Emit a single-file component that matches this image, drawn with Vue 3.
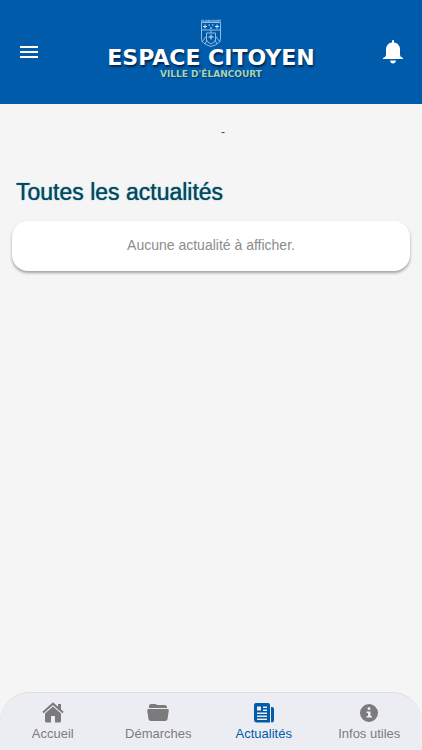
<script setup>
import { ref } from "vue";

const current = ref("news");

const tabs = [
  { id: "home", label: "Accueil" },
  { id: "procedures", label: "Démarches" },
  { id: "news", label: "Actualités" },
  { id: "infos", label: "Infos utiles" },
];
</script>

<template>
  <div class="app">
    <header class="header">
      <button class="header__btn" aria-label="Menu">
        <svg width="24" height="24" viewBox="0 0 24 24">
          <path d="M3 6h18v2H3zM3 11h18v2H3zM3 16h18v2H3z" />
        </svg>
      </button>
      <div class="logo">
        <svg class="logo__crest" width="20" height="28" viewBox="0 0 20 28">
          <text class="logo__banner" x="10" y="3" text-anchor="middle">ELANCOURT</text>
          <path d="M.5 3.500h19v17q0 4-9.500 7Q.5 24.500.5 20.500zM.5 11h19" />
          <path d="M10 11v3M5.500 14h9v7q0 2-4.500 4-4.500-2-4.500-4zM5.500 17L1 23M14.500 17L19 23M6 21l-2 4M14 21l2 4" />
          <path
            class="logo__cross"
            d="M10 15.500v5M7.500 18h5M4 5.500v4M2 7.500h4M16 5.500v4M14 7.500h4M7.500 6h1.500M11 6h1.500M10 8v2"
          />
        </svg>
        <span class="logo__name">ESPACE CITOYEN</span>
        <span class="logo__city">VILLE D'ÉLANCOURT</span>
      </div>
      <button class="header__btn" aria-label="Notifications">
        <svg width="24" height="24" viewBox="0 0 24 24">
          <path
            d="M12 0q1 0 1 1v1.500C17 3 19 6 19 9.500V15q0 2 3 3v1H2v-1q3-1 3-3V9.500C5 6 7 3 11 2.500V1q0-1 1-1zM9 20.500h6q-.5 3-3 3t-3-3z"
          />
        </svg>
      </button>
    </header>

    <main class="content">
      <p class="user">-</p>
      <h1 class="title">Toutes les actualités</h1>
      <div class="card">Aucune actualité à afficher.</div>
    </main>

    <nav class="tabs">
      <button
        v-for="tab in tabs"
        :key="tab.id"
        class="tabs__item"
        :class="{ 'is-active': current === tab.id }"
        @click="current = tab.id"
      >
        <svg v-if="tab.id === 'home'" width="24" height="22" viewBox="0 0 24 22">
          <path d="M4 11.500l8-7 8 7V19q0 1.500-1.500 1.500H14V14h-4v6.500H5.500Q4 20.500 4 19z" />
          <path class="tabs__roof" d="M2 10.500l10-8.800 10 8.800" />
          <path d="M17 2h3v6l-3-2.500z" />
        </svg>
        <svg v-else-if="tab.id === 'procedures'" width="24" height="22" viewBox="0 0 24 22">
          <path
            d="M3 6V4q0-2 2-2h4q1 0 2 1h7.500Q21 3 21 5v1zM2.500 7h19q1.500 0 1.300 1.500L21.500 17q-.3 2-2.500 2H5q-2.200 0-2.500-2L1.200 8.500Q1 7 2.500 7z"
          />
        </svg>
        <svg v-else-if="tab.id === 'news'" width="24" height="22" viewBox="0 0 24 22">
          <path
            fill-rule="evenodd"
            d="M4 1h12q2 0 2 2v17.500H5q-3 0-3-3V3q0-2 2-2zM5 4.500v4h4v-4zM11 4.500V6h4V4.500zM11 7.500V9h4V7.500zM5 10.500V12h10v-1.500zM5 13.500V15h10v-1.500zM5 16.500V18h10v-1.500z"
          />
          <path d="M19 5h1q2 0 2 2v11q0 2.500-2 2.500-1 0-1-1z" />
        </svg>
        <svg v-else width="24" height="22" viewBox="0 0 24 22">
          <path
            fill-rule="evenodd"
            d="M12 2a9 9 0 1 0 0 18 9 9 0 0 0 0-18zM12 5a1.500 1.500 0 1 1 0 3 1.500 1.500 0 0 1 0-3zM9.500 9.500h4V14H15v1.500H9.500V14H11v-3H9.500z"
          />
        </svg>
        <span>{{ tab.label }}</span>
      </button>
    </nav>
  </div>
</template>

<style>
body {
  margin: 0;
  background: #f5f5f5;
}
</style>

<style scoped>
.app {
  display: flex;
  flex-direction: column;
  min-height: 100vh;
  font-family: "Liberation Sans", Arial, sans-serif;
}

button {
  padding: 0;
  border: 0;
  background: none;
  font: inherit;
  cursor: pointer;
}

svg {
  display: block;
  fill: currentColor;
}

/*----------------------------
* Header
*----------------------------*/
.header {
  display: flex;
  align-items: center;
  justify-content: space-between;
  height: 104px;
  padding: 0 17px;
  box-sizing: border-box;
  background: #005baa;
}
.header__btn {
  color: #fff;
}
.logo {
  display: flex;
  flex-direction: column;
  align-items: center;
  padding-bottom: 6px;
  font-family: "DejaVu Sans", sans-serif;
  font-weight: bold;
  white-space: nowrap;
}
.logo__crest {
  fill: none;
  stroke: #8fbbe6;
  overflow: visible;
}
.logo__banner {
  font-size: 3px;
  fill: #a9cdf0;
  stroke: none;
}
.logo__cross {
  stroke: #d5e8fa;
}
.logo__name {
  font-size: 22px;
  line-height: 22px;
  color: #fff;
  text-shadow: 1px 2px 2px #00264d;
}
.logo__city {
  font-size: 9px;
  line-height: 10px;
  color: #a5d3b5;
  text-shadow: 1px 1px 1px #003c70;
}

/*----------------------------
* Content
*----------------------------*/
.content {
  flex: 1;
  padding: 20px 12px;
}
.user {
  margin: 0;
  padding-left: 24px;
  font-size: 12px;
  line-height: 16px;
  text-align: center;
  color: #2b5663;
}
.title {
  margin: 38px 4px 15px;
  font-size: 23px;
  line-height: 28px;
  font-weight: normal;
  color: #004b64;
  text-shadow: 0 0 1px #004b64;
}
.card {
  padding: 14px 16px 16px;
  border-radius: 16px;
  background: #fff;
  box-shadow: 0 2px 3px rgba(0, 0, 0, 0.35);
  font-size: 14px;
  line-height: 20px;
  text-align: center;
  color: #8c8c8c;
}

/*----------------------------
* Tabs
*----------------------------*/
.tabs {
  display: flex;
  padding: 9px 0 8px;
  border-top: 1px solid #dcdde4;
  border-radius: 30px 30px 0 0;
  background: #ecedf3;
}
.tabs__item {
  flex: 1;
  display: flex;
  flex-direction: column;
  align-items: center;
  gap: 2px;
  font-size: 13px;
  line-height: 16px;
  color: #7b7b7e;
}
.tabs__item.is-active {
  color: #005baa;
}
.tabs__roof {
  fill: none;
  stroke: currentColor;
  stroke-width: 2;
}
</style>
